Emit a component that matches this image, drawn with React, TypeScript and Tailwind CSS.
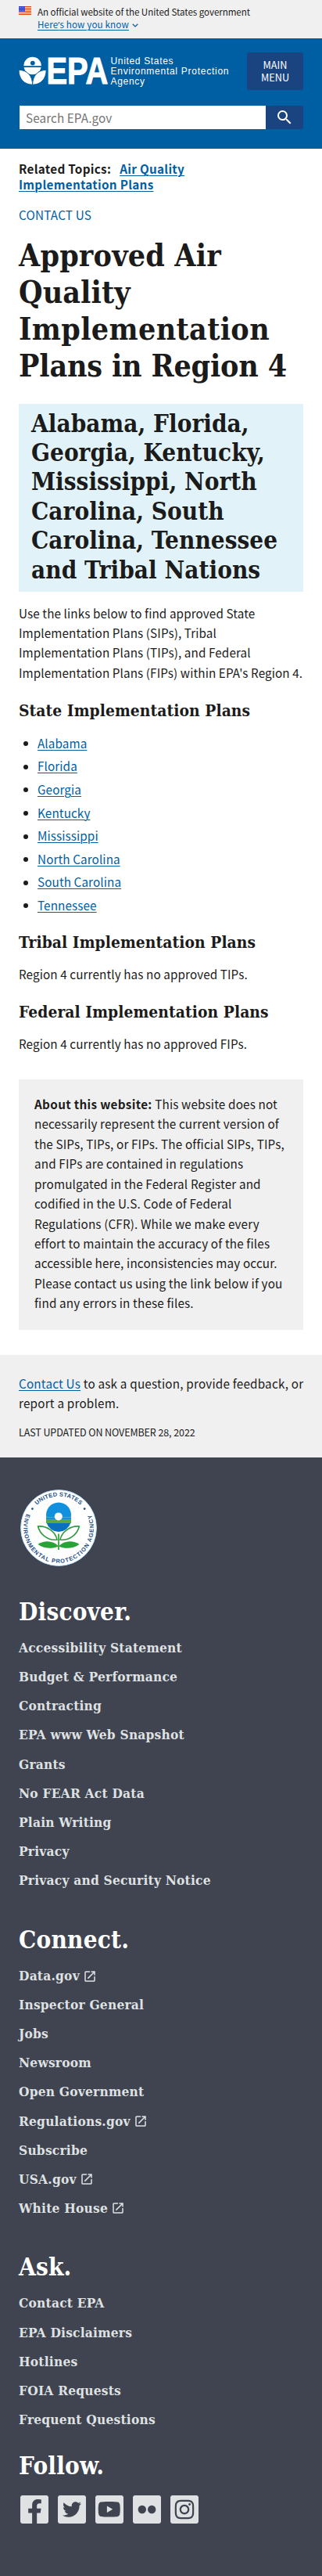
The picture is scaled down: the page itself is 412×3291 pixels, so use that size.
import type { ReactNode } from "react";
import { FaFacebookF, FaInstagram, FaTwitter, FaYoutube } from "react-icons/fa";
import { MdOpenInNew, MdSearch } from "react-icons/md";

const states = ["Alabama", "Florida", "Georgia", "Kentucky", "Mississippi", "North Carolina", "South Carolina", "Tennessee"];

type FooterLink = { label: string; external?: boolean };

const discover: FooterLink[] = [
  { label: "Accessibility Statement" },
  { label: "Budget & Performance" },
  { label: "Contracting" },
  { label: "EPA www Web Snapshot" },
  { label: "Grants" },
  { label: "No FEAR Act Data" },
  { label: "Plain Writing" },
  { label: "Privacy" },
  { label: "Privacy and Security Notice" },
];

const connect: FooterLink[] = [
  { label: "Data.gov", external: true },
  { label: "Inspector General" },
  { label: "Jobs" },
  { label: "Newsroom" },
  { label: "Open Government" },
  { label: "Regulations.gov", external: true },
  { label: "Subscribe" },
  { label: "USA.gov", external: true },
  { label: "White House", external: true },
];

const ask: FooterLink[] = [
  { label: "Contact EPA" },
  { label: "EPA Disclaimers" },
  { label: "Hotlines" },
  { label: "FOIA Requests" },
  { label: "Frequent Questions" },
];

const aboutLines = [
  "necessarily represent the current version of",
  "the SIPs, TIPs, or FIPs. The official SIPs, TIPs,",
  "and FIPs are contained in regulations",
  "promulgated in the Federal Register and",
  "codified in the U.S. Code of Federal",
  "Regulations (CFR). While we make every",
  "effort to maintain the accuracy of the files",
  "accessible here, inconsistencies may occur.",
  "Please contact us using the link below if you",
  "find any errors in these files.",
];

function Flag() {
  return (
    <svg className="mt-px h-[11px] w-4 shrink-0" viewBox="0 0 16 11">
      <rect width="16" height="11" fill="#fff" />
      {[0, 2, 4, 6, 8, 10].map((y) => (
        <rect key={y} y={y} width="16" height="1" fill="#db3e1f" />
      ))}
      <rect width="8" height="7" fill="#1e33b1" />
      {[1, 3, 5].map((y) => [1, 3, 5, 7].map((x) => <circle key={`${x}-${y}`} cx={x - (y === 3 ? 0 : 0.2)} cy={y + 0.3} r="0.5" fill="#fff" />))}
    </svg>
  );
}

function EpaLogo() {
  return (
    <svg className="h-[62px] w-[274px]" viewBox="0 -12 274 62">
      <circle cx="17.6" cy="12" r="11.2" fill="#fff" />
      <path d="M5 12.2H30V14H5Z" fill="#005ea2" />
      <circle cx="17.8" cy="8.6" r="2.9" fill="#005ea2" />
      <path d="M0 17.3C11 17.5 17.6 25 17.6 36.2C6.5 36 0 28.5 0 17.3Z" fill="#fff" stroke="#005ea2" strokeWidth="1" />
      <path d="M35.2 17.3C24.2 17.5 17.6 25 17.6 36.2C28.7 36 35.2 28.5 35.2 17.3Z" fill="#fff" stroke="#005ea2" strokeWidth="1" />
      <g fill="#fff" fontFamily="Liberation Sans, Arial, sans-serif" letterSpacing="0">
        <text x="35.4" y="35" fontSize="47.5" fontWeight="700" textLength="79" lengthAdjust="spacingAndGlyphs" stroke="#fff" strokeWidth="1.1">
          EPA
        </text>
        <g fontSize="12">
          <text x="117.5" y="10.4" textLength="80">United States</text>
          <text x="117.5" y="23" textLength="151">Environmental Protection</text>
          <text x="117.5" y="35.7" textLength="43.5">Agency</text>
        </g>
      </g>
    </svg>
  );
}

function Seal() {
  return (
    <svg className="h-[98px] w-[98px]" viewBox="0 0 98 98">
      <defs>
        <path id="seal-top" d="M8.6 49A40.4 40.4 0 0 1 89.4 49" />
        <path id="seal-bottom" d="M8.35 30.05A44.85 44.85 0 1 0 89.65 30.05" />
      </defs>
      <circle cx="49" cy="49" r="48.4" fill="#fff" stroke="#b9e0fb" strokeWidth="0.9" />
      <g fill="#1d4f86" fontFamily="Liberation Sans, Arial, sans-serif" fontWeight="700" fontSize="7.4" letterSpacing="0">
        <text textAnchor="middle" letterSpacing="0.3">
          <textPath href="#seal-top" startOffset="50%">UNITED STATES</textPath>
        </text>
        <text letterSpacing="0.95">
          <textPath href="#seal-bottom" startOffset="1">ENVIRONMENTAL PROTECTION AGENCY</textPath>
        </text>
      </g>
      <circle cx="15.4" cy="24.6" r="1.4" fill="#1d4f86" />
      <circle cx="82.2" cy="24.6" r="1.4" fill="#1d4f86" />
      <path d="M33.300 35.600A16 16 0 1 1 64.700 35.600Z" fill="#1191dd" />
      <path d="M33 37.600H65V43H33Z" fill="#5aa83f" />
      <path d="M33 35.400H65V38H33Z" fill="#1191dd" />
      <path d="M33.800 43H64.200A16 16 0 0 1 33.800 43Z" fill="#0672bf" />
      <circle cx="48.8" cy="34.4" r="5" fill="#fff" />
      <path d="M22.600 47C34 46 45 54 47 64C35 65.500 25 57 22.600 47Z" fill="#fff" stroke="#2e9a3c" strokeWidth="1.6" />
      <path d="M75.400 47C64 46 53 54 51 64C63 65.500 73 57 75.400 47Z" fill="#fff" stroke="#2e9a3c" strokeWidth="1.6" />
      <path d="M22.500 70C31 64.500 42 65 49 72.500C41 76 31 76 22.500 70Z" fill="#28a335" />
      <path d="M75.500 70C67 64.500 56 65 49 72.500C57 76 67 76 75.500 70Z" fill="#28a335" />
      <path d="M49 56.500V77" stroke="#28a335" strokeWidth="1.7" />
    </svg>
  );
}

function SectionHeading({ children, className = "" }: { children: ReactNode; className?: string }) {
  return (
    <h3 className={`h-[25px] whitespace-nowrap font-['DejaVu_Serif_Condensed','DejaVu_Serif',serif] text-[20.8px] leading-[25px] font-bold tracking-[0.09px] ${className}`}>
      {children}
    </h3>
  );
}

function FooterHeading({ children, className = "" }: { children: ReactNode; className?: string }) {
  return (
    <h2 className={`font-['DejaVu_Serif_Condensed','DejaVu_Serif',serif] text-[31.2px] leading-[37px] font-bold tracking-[0.2px] text-white ${className}`}>
      {children}
    </h2>
  );
}

function FooterList({ links }: { links: FooterLink[] }) {
  return (
    <ul className="mt-[9px]">
      {links.map(({ label, external }) => (
        <li key={label} className="flex h-[37.1px] items-center font-['DejaVu_Serif_Condensed','DejaVu_Serif',serif] text-[17.2px] leading-[37.1px] font-bold tracking-[0.22px] whitespace-nowrap text-[#dfe1e2]">
          <a href="#">{label}</a>
          {external && <MdOpenInNew className="ml-[4px] size-[18px]" />}
        </li>
      ))}
    </ul>
  );
}

function SocialTile({ children }: { children: ReactNode }) {
  return <a href="#" className="flex size-9 items-center justify-center overflow-hidden rounded-[3px] bg-[#dfe1e2] text-[#3f4450]">{children}</a>;
}

const link = "text-[#005ea2] underline decoration-1 underline-offset-[1.5px]";

export default function App() {
  return (
    <div className="flex h-[3291px] w-[412px] flex-col overflow-hidden bg-white font-['Noto_Sans_CJK_SC','Source_Sans_Pro',sans-serif] text-[15.25px] tracking-[0.1px] text-[#1b1b1b]">
      <div className="flex h-[49px] shrink-0 gap-2 bg-[#f0f0f0] px-6 pt-[7px]">
        <Flag />
        <div className="text-[11.6px] leading-4 tracking-[-0.06px] whitespace-nowrap">
          <p>An official website of the United States government</p>
          <p className="flex items-center">
            <a href="#" className={`tracking-[0.15px] ${link}`}>Here<span className="font-['Noto_Sans']">’</span>s how you know</a>
            <svg className="mt-[2px] ml-1 h-[5px] w-2" viewBox="0 0 8 5">
              <path d="M0.7 0.7L4 3.9L7.3 0.7" fill="none" stroke="#005ea2" strokeWidth="1.3" />
            </svg>
          </p>
        </div>
      </div>

      <header className="flex h-[141px] shrink-0 flex-col bg-[#005ea2] px-6 pt-[18px]">
        <div className="flex h-12 items-start justify-between">
          <div className="-mt-[7px] -mb-2">
            <EpaLogo />
          </div>
          <button className="flex h-12 w-[72px] items-center justify-center rounded-[3px] bg-[#1a4480] text-center text-[12.7px] leading-4 tracking-normal text-white">
            MAIN
            <br />
            MENU
          </button>
        </div>
        <form className="mt-5 flex h-[30px]">
          <div className="ml-px flex-1 bg-white pl-2 leading-[30px] text-[#757575]">Search EPA.gov</div>
          <button type="button" className="flex w-12 items-center justify-center rounded-r-[3px] bg-[#1a4480] text-white">
            <MdSearch className="size-[24px]" />
          </button>
        </form>
      </header>

      <main className="h-[1541px] shrink-0 px-6 pt-[15.4px]">
        <p className="leading-5 font-bold tracking-[0.3px]">
          Related Topics:
          <a href="#" className={`ml-[11px] ${link}`}>Air Quality</a>
          <br />
          <a href="#" className={link}>Implementation Plans</a>
        </p>
        <p className="mt-[17px] leading-6 tracking-[0.2px]">
          <a href="#" className="text-[#005ea2]">CONTACT US</a>
        </p>

        <h1 className="mt-[16.4px] font-['DejaVu_Serif_Condensed','DejaVu_Serif',serif] text-[39px] leading-[47px] font-bold whitespace-nowrap">
          <span className="block tracking-[0.19px]">Approved Air</span>
          <span className="block tracking-[0.1px]">Quality</span>
          <span className="block tracking-[0.35px]">Implementation</span>
          <span className="block tracking-[-0.17px]">Plans in Region 4</span>
        </h1>

        <h2 className="mt-[25px] h-60 bg-[#e1f3f8] px-4 pt-[7px] font-['DejaVu_Serif_Condensed','DejaVu_Serif',serif] text-[31.2px] leading-[37.35px] font-bold tracking-[0.03px] whitespace-nowrap">
          Alabama, Florida,
          <br />
          Georgia, Kentucky,
          <br />
          Mississippi, North
          <br />
          Carolina, South
          <br />
          Carolina, Tennessee
          <br />
          and Tribal Nations
        </h2>

        <p className="mt-[14.8px] leading-[25.44px] whitespace-nowrap">
          Use the links below to find approved State
          <br />
          Implementation Plans (SIPs), Tribal
          <br />
          Implementation Plans (TIPs), and Federal
          <br />
          Implementation Plans (FIPs) within EPA's Region 4.
        </p>

        <SectionHeading className="mt-[23px]">State Implementation Plans</SectionHeading>
        <ul className="mt-[16.5px]">
          {states.map((s) => (
            <li key={s} className="flex h-[29.6px] items-start leading-[25.44px]">
              <span className="mt-[10.4px] ml-[6px] size-[6px] rounded-full bg-[#1b1b1b]" />
              <a href="#" className={`ml-3 ${link}`}>{s}</a>
            </li>
          ))}
        </ul>

        <SectionHeading className="mt-[17.5px]">Tribal Implementation Plans</SectionHeading>
        <p className="mt-[15.5px] leading-[25.44px]">Region 4 currently has no approved TIPs.</p>

        <SectionHeading className="mt-[23.3px]">Federal Implementation Plans</SectionHeading>
        <p className="mt-[15.5px] leading-[25.44px]">Region 4 currently has no approved FIPs.</p>

        <div className="mt-[32.7px] h-80 bg-[#f0f0f0] pt-[19px] pl-5 leading-[25.44px] tracking-[0.15px] whitespace-nowrap">
          <strong className="tracking-[0.33px]">About this website:</strong> This website does not
          {aboutLines.map((line) => (
            <span key={line} className="block">{line}</span>
          ))}
        </div>
      </main>

      <section className="h-[131px] shrink-0 bg-[#f0f0f0] px-6 pt-[23.6px] whitespace-nowrap">
        <p className="leading-[25.44px] tracking-[0.2px]">
          <a href="#" className={link}>Contact Us</a> to ask a question, provide feedback, or
          <br />
          report a problem.
        </p>
        <p className="mt-[14.4px] text-[12.5px] leading-5 tracking-[-0.09px]">LAST UPDATED ON NOVEMBER 28, 2022</p>
      </section>

      <footer className="flex-1 bg-[#3f4450] px-6 pt-[41px]">
        <div className="h-[98px] pl-[1.5px]">
          <Seal />
        </div>
        <FooterHeading className="mt-[40.2px]">Discover.</FooterHeading>
        <FooterList links={discover} />
        <FooterHeading className="mt-[39px]">Connect.</FooterHeading>
        <FooterList links={connect} />
        <FooterHeading className="mt-[38.6px]">Ask.</FooterHeading>
        <FooterList links={ask} />
        <FooterHeading className="mt-[22.5px]">Follow.</FooterHeading>
        <div className="mt-[18.5px] ml-[2px] flex gap-3">
          <SocialTile>
            <FaFacebookF className="mt-[6px] size-[31px]" />
          </SocialTile>
          <SocialTile>
            <FaTwitter className="size-6" />
          </SocialTile>
          <SocialTile>
            <FaYoutube className="size-[29.5px]" />
          </SocialTile>
          <SocialTile>
            <svg className="size-6" viewBox="0 0 24 24" fill="currentColor">
              <circle cx="5.8" cy="12" r="5.2" />
              <circle cx="18.2" cy="12" r="5.2" />
            </svg>
          </SocialTile>
          <SocialTile>
            <FaInstagram className="size-7" />
          </SocialTile>
        </div>
      </footer>
    </div>
  );
}
